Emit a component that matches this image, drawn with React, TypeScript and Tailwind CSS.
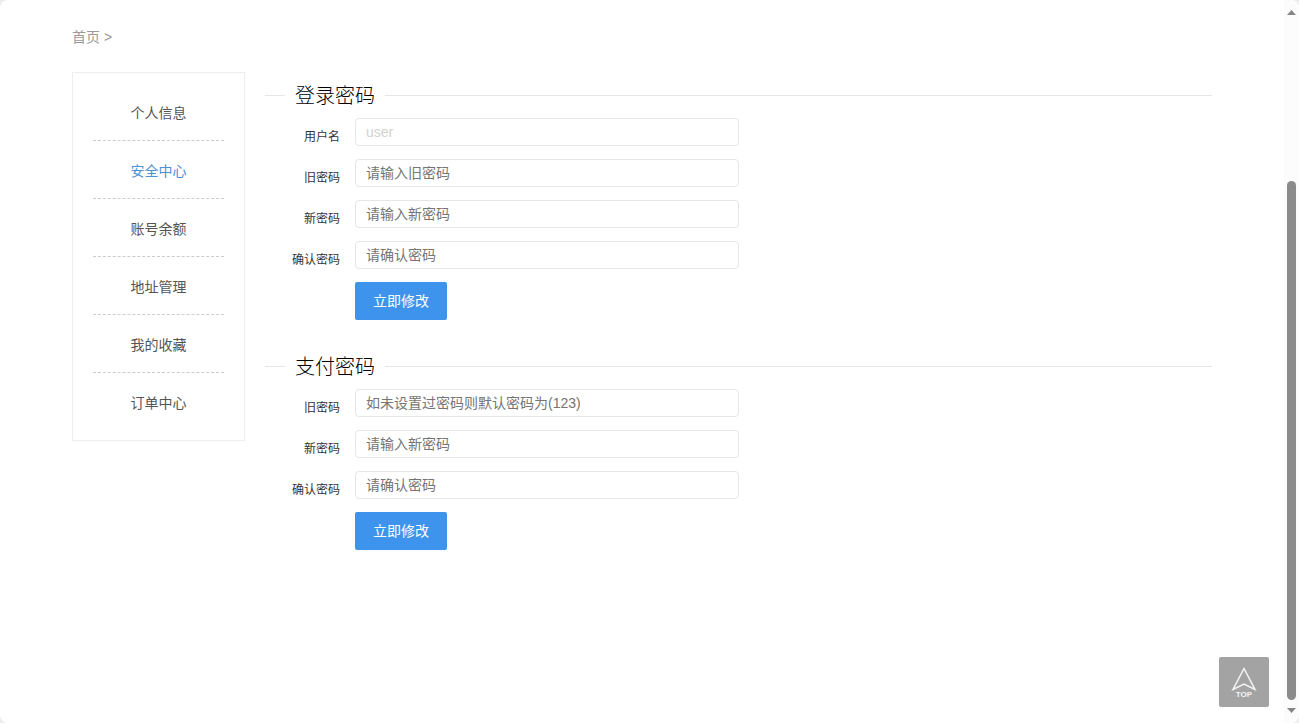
const menu = [
  { label: '个人信息', active: false },
  { label: '安全中心', active: true },
  { label: '账号余额', active: false },
  { label: '地址管理', active: false },
  { label: '我的收藏', active: false },
  { label: '订单中心', active: false },
];

type Field = {
  id: string;
  label: string;
  placeholder: string;
  disabled?: boolean;
};

const loginFields: Field[] = [
  { id: 'username', label: '用户名', placeholder: 'user', disabled: true },
  { id: 'login-old', label: '旧密码', placeholder: '请输入旧密码' },
  { id: 'login-new', label: '新密码', placeholder: '请输入新密码' },
  { id: 'login-confirm', label: '确认密码', placeholder: '请确认密码' },
];

const payFields: Field[] = [
  { id: 'pay-old', label: '旧密码', placeholder: '如未设置过密码则默认密码为(123)' },
  { id: 'pay-new', label: '新密码', placeholder: '请输入新密码' },
  { id: 'pay-confirm', label: '确认密码', placeholder: '请确认密码' },
];

function PasswordForm({ title, fields }: { title: string; fields: Field[] }) {
  return (
    <form onSubmit={(e) => e.preventDefault()}>
      <fieldset className="border-t border-[#e6e6e6]">
        <legend className="ml-5 px-[10px] pt-[2px] text-xl leading-7 font-light text-black">{title}</legend>
        <div className="flex flex-col gap-3 pt-2">
          {fields.map((field) => (
            <div key={field.id} className="flex">
              <label
                htmlFor={field.id}
                className="w-[90px] shrink-0 pt-[9px] pr-[15px] text-right text-xs leading-5 text-[#333]"
              >
                {field.label}
              </label>
              <input
                id={field.id}
                type={field.disabled ? 'text' : 'password'}
                placeholder={field.placeholder}
                disabled={field.disabled}
                className="h-7 w-full max-w-96 rounded-[4px] border border-[#e6e6e6] bg-white px-[10px] text-sm placeholder:text-[#757575] disabled:placeholder:text-[#d2d2d2]"
              />
            </div>
          ))}
          <button
            type="submit"
            className="ml-[90px] h-[38px] self-start rounded-[2px] bg-[#3e94ec] px-[18px] text-sm text-white"
          >
            立即修改
          </button>
        </div>
      </fieldset>
    </form>
  );
}

function ScrollRail() {
  return (
    <div className="flex w-[15px] shrink-0 flex-col items-center bg-[#fcfcfc] py-[10px]" aria-hidden="true">
      <svg width="9" height="5" viewBox="0 0 9 5" fill="#868686">
        <path d="M4.5 0 9 5H0z" />
      </svg>
      <div className="mt-[166px] w-[9px] flex-1 rounded-full bg-[#8b8b8b]" />
      <svg className="mt-2" width="9" height="5" viewBox="0 0 9 5" fill="#868686">
        <path d="M0 0h9L4.5 5z" />
      </svg>
    </div>
  );
}

export default function App() {
  return (
    <div className="min-h-screen bg-[#ececec] font-['Liberation_Sans','Noto_Sans_CJK_SC',sans-serif]">
      <div className="flex min-h-screen overflow-hidden rounded-lg bg-white">
        <div className="flex-1">
          <div className="mx-auto max-w-[1140px]">
            <nav className="pt-[27px] text-sm leading-5 text-[#999]">
              <a href="#home">首页</a> &gt;
            </nav>
            <div className="flex gap-5 pt-[25px]">
              <ul className="w-[173px] shrink-0 self-start border border-[#eee] px-5 py-[10px]">
                {menu.map((item) => (
                  <li key={item.label} className="border-b border-dashed border-[#ccc] last:border-b-0">
                    <a
                      href="#menu"
                      className={
                        item.active
                          ? 'block pt-5 pb-[17px] text-center text-sm leading-5 text-[#4a90d2]'
                          : 'block pt-5 pb-[17px] text-center text-sm leading-5 text-[#555]'
                      }
                    >
                      {item.label}
                    </a>
                  </li>
                ))}
              </ul>
              <main className="flex flex-1 flex-col gap-[31px] pt-2">
                <PasswordForm title="登录密码" fields={loginFields} />
                <PasswordForm title="支付密码" fields={payFields} />
              </main>
            </div>
          </div>
        </div>
        <ScrollRail />
      </div>
      <button
        type="button"
        aria-label="TOP"
        className="fixed right-[30px] bottom-4 flex size-[50px] flex-col items-center rounded-[2px] bg-[#a3a3a3] pt-[10px] text-[#f4f4f4]"
      >
        <svg width="26" height="24" viewBox="0 0 26 24" fill="none" stroke="currentColor" strokeWidth="1.5">
          <path d="M13 1.5 2 22.5 13 17 24 22.5z" />
        </svg>
        <span className="text-[8px] leading-[7px] font-bold">TOP</span>
      </button>
    </div>
  );
}
